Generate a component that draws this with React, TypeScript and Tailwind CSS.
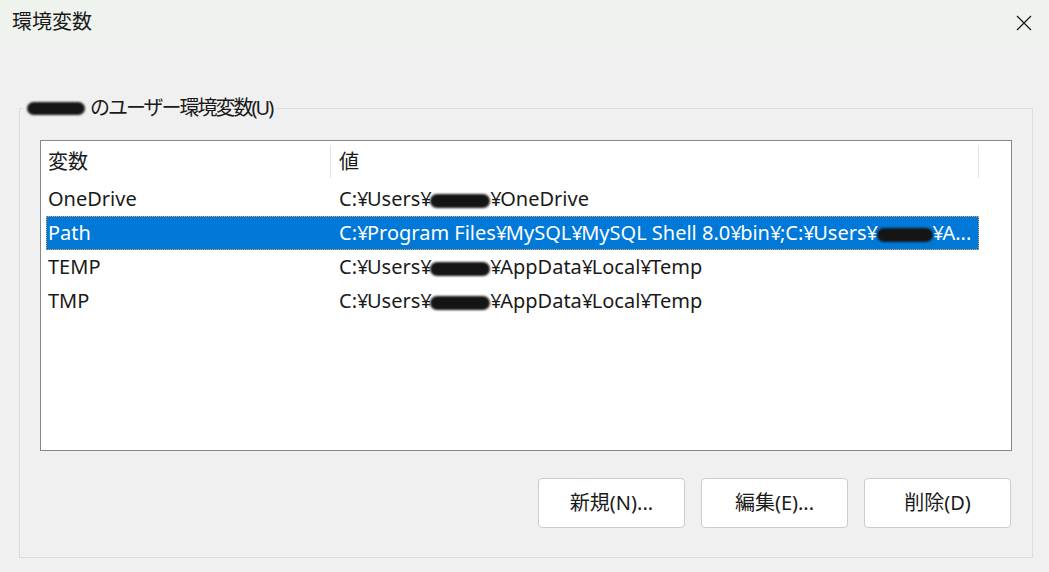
import { ReactNode } from 'react';

const font = { fontFamily: '"Noto Sans", "Noto Sans CJK JP", sans-serif' };

function Blob({ w, h = 14 }: { w: number; h?: number }) {
  return (
    <span
      className="inline-block rounded-full bg-[#151515] blur-[0.8px] align-middle"
      style={{ width: w, height: h }}
    />
  );
}

// ¥ is narrower in the dialog font
function Y() {
  return <span className="tracking-[-1.5px]">¥</span>;
}

type Row = { name: string; value: ReactNode; selected?: boolean };

const rows: Row[] = [
  {
    name: 'OneDrive',
    value: (
      <>
        C:<Y />Users<Y /><Blob w={60} /><Y />OneDrive
      </>
    ),
  },
  {
    name: 'Path',
    selected: true,
    value: (
      <>
        C:<Y />Program Files<Y />MySQL<Y />MySQL Shell 8.0<Y />bin<Y />;C:<Y />Users<Y /><Blob w={56} /><Y />A...
      </>
    ),
  },
  {
    name: 'TEMP',
    value: (
      <>
        C:<Y />Users<Y /><Blob w={60} /><Y />AppData<Y />Local<Y />Temp
      </>
    ),
  },
  {
    name: 'TMP',
    value: (
      <>
        C:<Y />Users<Y /><Blob w={60} /><Y />AppData<Y />Local<Y />Temp
      </>
    ),
  },
];

export default function App() {
  return (
    <div className="w-[1049px] h-[572px] bg-[#f0f0f0] text-[#1a1a1a] overflow-hidden" style={font}>
      {/* title bar */}
      <div className="h-[45px] bg-[#eff3ee] flex items-center justify-between pl-3 pr-4">
        <span className="text-[20px] leading-none -mt-[2px]">環境変数</span>
        <svg width="16" height="16" viewBox="0 0 16 16" className="mr-[1px]">
          <path d="M1 1 L15 15 M15 1 L1 15" stroke="#1a1a1a" strokeWidth="1.3" />
        </svg>
      </div>

      <div className="pt-[51px] pl-[19px] pr-[16px]">
        <fieldset className="border border-[#dcdcdc] h-[462px] px-5 pb-[29px] pt-[20px] flex flex-col">
          <legend className="-ml-[17px] px-[4px] text-[20px] leading-[24px] flex items-center gap-[5px]">
            <Blob w={58} h={13} />
            <span className="tracking-[-2px]">のユーザー環境変数(U)</span>
          </legend>

          {/* list */}
          <div className="h-[311px] bg-white border border-[#83868c] pl-[5px]">
            <div className="w-[933px] h-[41px] flex text-[20px]">
              <div className="w-[285px] flex items-center pl-[2px] border-r border-[#e3e3e3] my-[4px]">変数</div>
              <div className="flex-1 flex items-center pl-[8px] border-r border-[#e3e3e3] my-[4px]">値</div>
            </div>
            {rows.map((r) => (
              <div
                key={r.name}
                className={
                  r.selected
                    ? 'w-[933px] h-[34px] flex items-center text-[20px] bg-[#0078d7] text-white outline outline-1 outline-dotted outline-[#f0a050] -outline-offset-1'
                    : 'w-[933px] h-[34px] flex items-center text-[20px]'
                }
              >
                <div className="w-[285px] pl-[2px] leading-none">{r.name}</div>
                <div className="flex-1 pl-[8px] leading-[24px] whitespace-nowrap">{r.value}</div>
              </div>
            ))}
          </div>

          <div className="flex-1" />
          <div className="flex justify-end gap-4 pr-[1px]">
            {['新規(N)...', '編集(E)...', '削除(D)'].map((t) => (
              <button
                key={t}
                className="w-[147px] h-[50px] bg-white border border-[#cccccc] rounded-[4px] text-[20px] text-[#1a1a1a]"
              >
                {t}
              </button>
            ))}
          </div>
        </fieldset>
      </div>
    </div>
  );
}
